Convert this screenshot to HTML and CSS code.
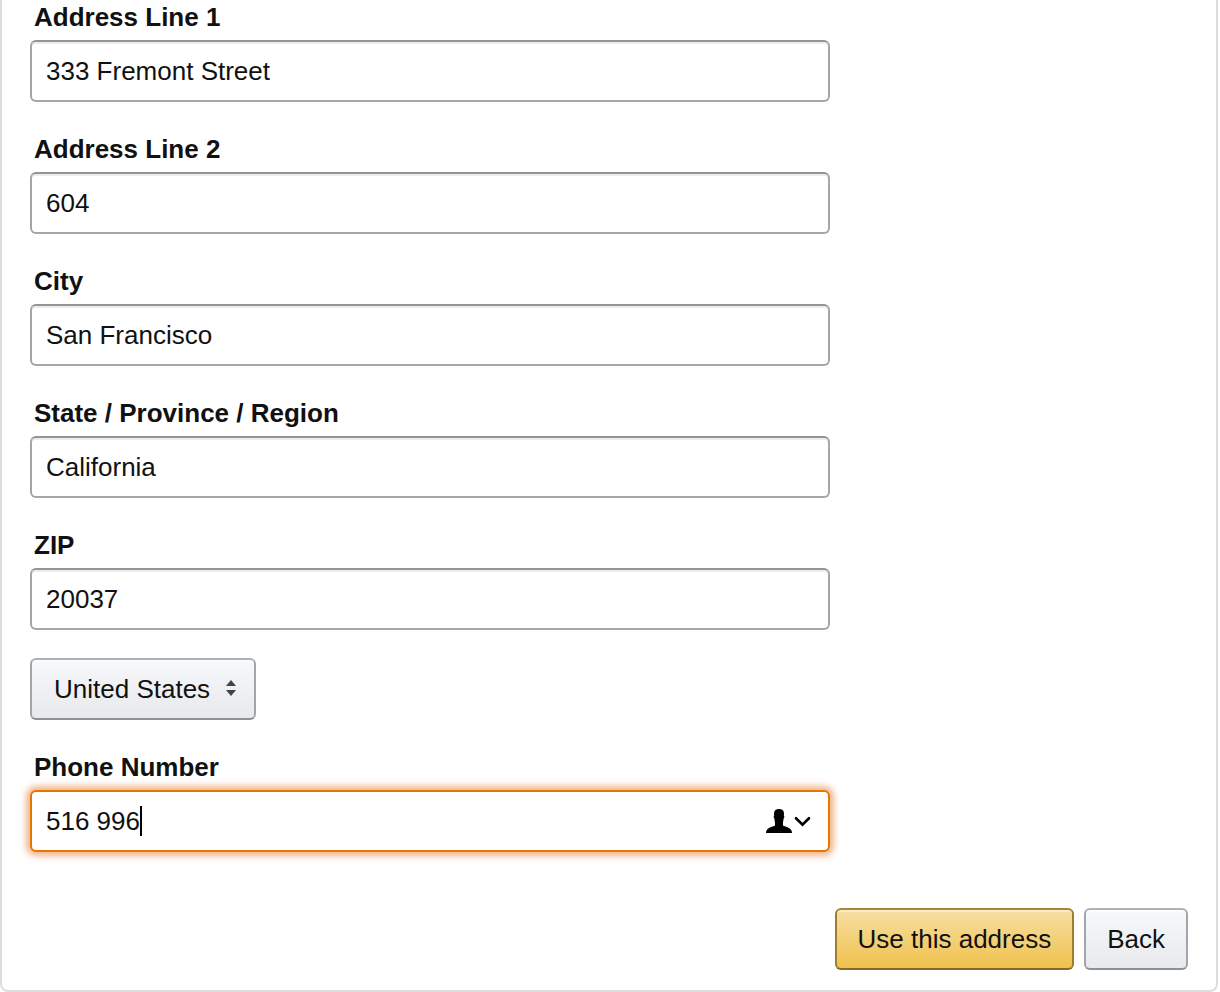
FILE: index.html
```html
<!DOCTYPE html>
<html lang="en">

<head>
    <meta charset="UTF-8">
    <meta name="viewport" content="width=device-width, initial-scale=1.0">
    <title>Address</title>
    <link rel="stylesheet" href="styles.css">
</head>

<body>
    <form class="card">
        <div class="fields">
            <div class="field">
                <label for="line1">Address Line 1</label>
                <input type="text" id="line1" class="text" value="333 Fremont Street">
            </div>
            <div class="field">
                <label for="line2">Address Line 2</label>
                <input type="text" id="line2" class="text" value="604">
            </div>
            <div class="field">
                <label for="city">City</label>
                <input type="text" id="city" class="text" value="San Francisco">
            </div>
            <div class="field">
                <label for="state">State / Province / Region</label>
                <input type="text" id="state" class="text" value="California">
            </div>
            <div class="field">
                <label for="zip">ZIP</label>
                <input type="text" id="zip" class="text" value="20037">
            </div>
            <div class="country">
                <select class="btn" aria-label="Country">
                    <option>United States</option>
                </select>
                <svg class="arrows" width="10" height="16" viewBox="0 0 10 16">
                    <path d="M5 0 L10 6 H0 Z M0 10 H10 L5 16 Z" fill="#444"/>
                </svg>
            </div>
            <div class="field">
                <label for="phone">Phone Number</label>
                <div class="phone">
                    <input type="text" id="phone" class="text active" value="516 996">
                    <span class="caret"></span>
                    <!-- contact autofill -->
                    <svg class="contact" width="46" height="24" viewBox="0 0 46 24">
                        <path d="M13 0 C16 0 18 1.5 18 4.4 C18 5.2 17.9 5.8 17.8 6.4 C18.6 6.8 18.4 9 17.6 9.6 C17.4 11.4 17.2 12.6 17 13.6 V16.6 C18 17.3 19.5 17.6 21.5 18.2 C24.4 19.2 26 21 26 24 H0 C0 21 1.6 19.2 4.5 18.2 C6.5 17.6 8 17.3 9 16.6 V13.6 C8.8 12.6 8.6 11.4 8.4 9.6 C7.6 9 7.4 6.8 8.2 6.4 C8.1 5.8 8 5.2 8 4.4 C8 1.5 10 0 13 0 Z" fill="#000"/>
                        <path d="M30 9.2 L36.5 15.6 L43 9.2" fill="none" stroke="#000" stroke-width="2.6" stroke-linecap="round"/>
                    </svg>
                </div>
            </div>
        </div>
        <div class="actions">
            <button type="submit" class="btn primary">Use this address</button>
            <button type="button" class="btn">Back</button>
        </div>
    </form>
</body>

</html>
```
FILE: styles.css
```css
* {
    box-sizing: border-box;
}

body {
    margin: 0;
    background: #fff;
    color: #111;
    font: 26px/34px "Liberation Sans", Arial, sans-serif;
}

.card {
    margin-right: 2px;
    padding: 0 28px 20px;
    border: 2px solid #ddd;
    border-top: 0;
    border-radius: 0 0 8px 8px;
}

.fields {
    display: flex;
    flex-direction: column;
    gap: 28px;
    max-width: 800px;
}

.field label {
    display: block;
    padding: 2px 4px 6px;
    font-weight: bold;
}

.field:first-child label {
    padding-top: 0;
}

.text {
    display: block;
    width: 100%;
    height: 62px;
    padding: 0 14px;
    border: 2px solid #a6a6a6;
    border-top-color: #949494;
    border-radius: 6px;
    background: #fff;
    box-shadow: inset 0 2px 0 rgba(0, 0, 0, .07);
    color: #111;
    font: inherit;
    outline: 0;
}

.text.active {
    border-color: #e77600;
    box-shadow: 0 0 6px 4px rgba(228, 112, 30, .5);
}

.phone,
.country {
    position: relative;
}

.country {
    align-self: flex-start;
}

.caret {
    position: absolute;
    top: 16px;
    left: 110px;
    width: 2px;
    height: 30px;
    background: #000;
}

.contact {
    position: absolute;
    top: 19px;
    right: 18px;
}

.arrows {
    position: absolute;
    top: 22px;
    right: 20px;
    pointer-events: none;
}

.btn {
    display: block;
    height: 62px;
    padding: 0 21px;
    border: 2px solid;
    border-color: #adb1b8 #a2a6ac #8d9096;
    border-radius: 6px;
    background: linear-gradient(#f7f8fa, #e7e9ec);
    box-shadow: inset 0 2px 0 rgba(255, 255, 255, .6);
    color: #111;
    font: inherit;
    cursor: pointer;
}

select.btn {
    appearance: none;
    padding: 0 43px 0 22px;
}

.btn.primary {
    border-color: #a88734 #9c7e31 #846a29;
    background: linear-gradient(#f7dfa5, #f0c14b);
    box-shadow: inset 0 2px 0 rgba(255, 255, 255, .4);
}

.actions {
    display: flex;
    justify-content: flex-end;
    gap: 10px;
    margin-top: 56px;
}
```
